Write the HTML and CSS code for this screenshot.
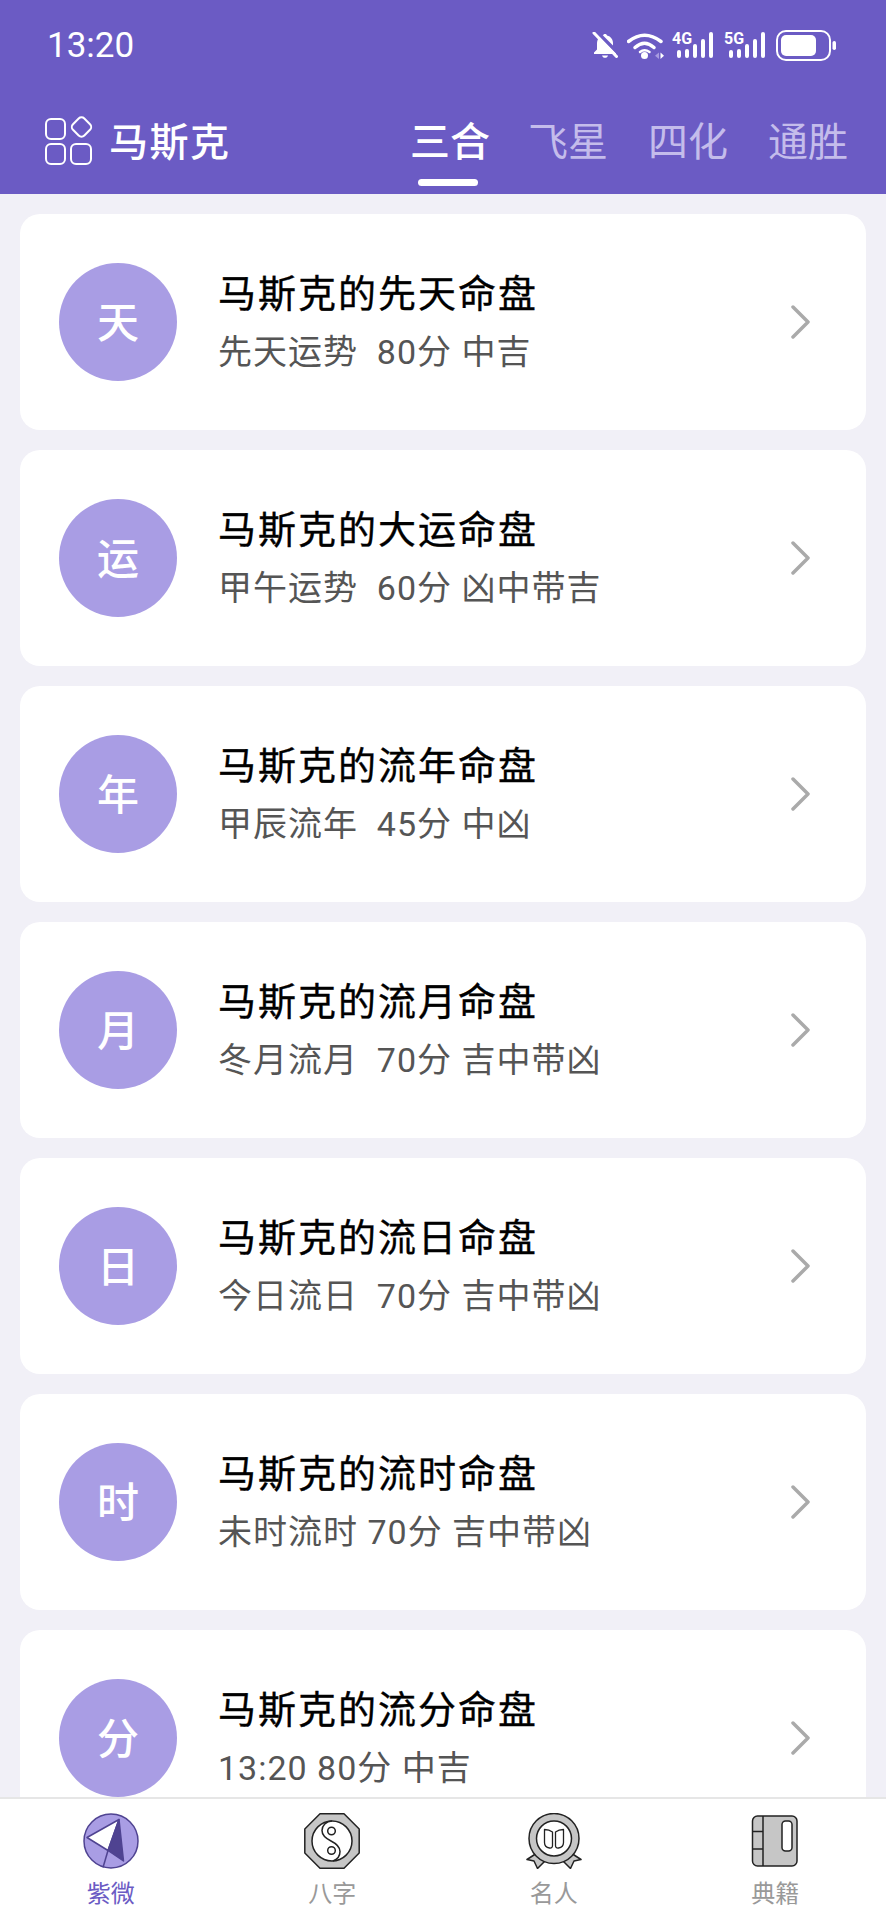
FILE: index.html
```html
<!DOCTYPE html>
<html lang="zh-CN">
<head>
<meta charset="utf-8">
<title>马斯克</title>
<link rel="stylesheet" href="styles.css">
</head>
<body>
<div class="app">
  <header class="top">
    <div class="status">
      <span class="time">13:20</span>
      <div class="status-icons">
        <svg class="ic-bell" viewBox="0 0 26 26"><path d="M13 2c1 0 2 .7 2 1.600 4 1 6 4 6 8v6l3 3v1.500H2v-1.500l3-3v-6c0-4 2-7 6-8C11 2.700 12 2 13 2z" fill="#fff"/><path d="M10 23.500h6c-.5 1.500-1.500 2.300-3 2.300s-2.500-.8-3-2.300z" fill="#fff"/><path d="M4 -1L27 22" stroke="#6b5bc4" stroke-width="3.500"/><path d="M2 1L24.500 24.500" stroke="#fff" stroke-width="3" stroke-linecap="round"/></svg>
        <svg class="ic-wifi" viewBox="0 0 37 29" fill="none" stroke="#fff" stroke-linecap="round"><path d="M1.500 10.500Q17.500-2 34 10.500" stroke-width="3.500"/><path d="M8 16.500Q17.500 8 27 16.500" stroke-width="3.500"/><path d="M13 21Q17.500 17.500 22.500 21" stroke-width="2.500"/><circle cx="17.500" cy="24.500" r="3.500" fill="#fff" stroke="none"/><path d="M32 21.500l-4 3.300 4 3.200z" fill="#a79ce0" stroke="none"/><path d="M33.500 21.500l3.500 3.300-3.500 3.200z" fill="#fff" stroke="none"/></svg>
        <div class="net"><span class="net-label">4G</span><svg class="bars" viewBox="0 0 42 27"><rect x="5" y="18" width="4" height="8" rx="2"/><rect x="13" y="17" width="4" height="9" rx="2"/><rect x="21" y="12" width="4" height="14" rx="2"/><rect x="29" y="7" width="4" height="19" rx="2"/><rect x="37" y="0" width="4" height="26" rx="2"/></svg></div>
        <div class="net"><span class="net-label">5G</span><svg class="bars" viewBox="0 0 42 27"><rect x="5" y="18" width="4" height="8" rx="2"/><rect x="13" y="17" width="4" height="9" rx="2"/><rect x="21" y="12" width="4" height="14" rx="2"/><rect x="29" y="7" width="4" height="19" rx="2"/><rect x="37" y="0" width="4" height="26" rx="2"/></svg></div>
        <svg class="ic-batt" viewBox="0 0 61 31"><rect x="1" y="1" width="53" height="29" rx="9" fill="none" stroke="#fff" stroke-width="2"/><rect x="5" y="5" width="35" height="21" rx="5" fill="#fff"/><rect x="56.500" y="11" width="3.500" height="9" rx="1.700" fill="#fff"/></svg>
      </div>
    </div>
    <div class="bar">
      <div class="brand">
        <svg class="ic-apps" viewBox="0 0 50 50" fill="none" stroke="#fff" stroke-width="2"><rect x="2" y="4" width="19" height="20" rx="5"/><rect x="29.500" y="4" width="16" height="16" rx="4" transform="rotate(45 37.500 12)"/><rect x="2" y="29" width="19" height="20" rx="5"/><rect x="27" y="29" width="20" height="20" rx="5"/></svg>
        <span class="brand-name">马斯克</span>
      </div>
      <nav class="tabs">
        <span class="tab tab-on">三合</span>
        <span class="tab">飞星</span>
        <span class="tab">四化</span>
        <span class="tab">通胜</span>
      </nav>
    </div>
  </header>

  <main class="list">
    <article class="card"><div class="dot">天</div><div class="info"><h2 class="name">马斯克的先天命盘</h2><p class="sub">先天运势&nbsp; 80分 中吉</p></div><svg class="chev" viewBox="0 0 20 34"><path d="M2 2l15 15L2 32"/></svg></article>
    <article class="card"><div class="dot">运</div><div class="info"><h2 class="name">马斯克的大运命盘</h2><p class="sub">甲午运势&nbsp; 60分 凶中带吉</p></div><svg class="chev" viewBox="0 0 20 34"><path d="M2 2l15 15L2 32"/></svg></article>
    <article class="card"><div class="dot">年</div><div class="info"><h2 class="name">马斯克的流年命盘</h2><p class="sub">甲辰流年&nbsp; 45分 中凶</p></div><svg class="chev" viewBox="0 0 20 34"><path d="M2 2l15 15L2 32"/></svg></article>
    <article class="card"><div class="dot">月</div><div class="info"><h2 class="name">马斯克的流月命盘</h2><p class="sub">冬月流月&nbsp; 70分 吉中带凶</p></div><svg class="chev" viewBox="0 0 20 34"><path d="M2 2l15 15L2 32"/></svg></article>
    <article class="card"><div class="dot">日</div><div class="info"><h2 class="name">马斯克的流日命盘</h2><p class="sub">今日流日&nbsp; 70分 吉中带凶</p></div><svg class="chev" viewBox="0 0 20 34"><path d="M2 2l15 15L2 32"/></svg></article>
    <article class="card"><div class="dot">时</div><div class="info"><h2 class="name">马斯克的流时命盘</h2><p class="sub">未时流时 70分 吉中带凶</p></div><svg class="chev" viewBox="0 0 20 34"><path d="M2 2l15 15L2 32"/></svg></article>
    <article class="card"><div class="dot">分</div><div class="info"><h2 class="name">马斯克的流分命盘</h2><p class="sub">13:20 80分 中吉</p></div><svg class="chev" viewBox="0 0 20 34"><path d="M2 2l15 15L2 32"/></svg></article>
  </main>

  <footer class="dock">
    <div class="dock-item dock-on">
      <svg class="dock-ic" viewBox="0 0 56 56"><circle cx="28" cy="28" r="27" fill="#a99de4" stroke="#4f4391" stroke-width="1.500"/><path d="M4 24.500L36 6.500 25 37.500z" fill="#fff" stroke="#4f4391" stroke-width="1.500" stroke-linejoin="round"/><path d="M36 6.500L40.500 48 25 37.500z" fill="#4f4391" stroke="#4f4391" stroke-width="1.500" stroke-linejoin="round"/><path d="M25 37.500L20 54.500" stroke="#4f4391" stroke-width="1.500"/></svg>
      <span class="dock-label">紫微</span>
    </div>
    <div class="dock-item">
      <svg class="dock-ic" viewBox="0 0 56 56"><path d="M16 .8h24L55.200 16v24L40 55.200H16L.8 40V16z" fill="#c6c6c6" stroke="#222" stroke-width="1.500" stroke-linejoin="round"/><circle cx="28" cy="28" r="20" fill="#fff" stroke="#222" stroke-width="1.500"/><path d="M28 8c-6 0-10 5-10 9.500C18 23 23 26 27 28c4 2 9 5 9 10.500 0 4.500-3 8-7 9.500" fill="none" stroke="#222" stroke-width="1.500"/><circle cx="27.500" cy="18" r="3.800" fill="#fff" stroke="#222" stroke-width="1.500"/><circle cx="27.500" cy="37.500" r="3.800" fill="#fff" stroke="#222" stroke-width="1.500"/></svg>
      <span class="dock-label">八字</span>
    </div>
    <div class="dock-item">
      <svg class="dock-ic" viewBox="0 0 56 56"><path d="M11 40L1 46.500l7 1.500 3.500 7.500 9-9zM45 40l10 6.500-7 1.500-3.500 7.500-9-9z" fill="#c6c6c6" stroke="#222" stroke-width="1.500" stroke-linejoin="round"/><circle cx="28" cy="25.500" r="25" fill="#c6c6c6" stroke="#222" stroke-width="1.500"/><circle cx="28" cy="25.500" r="17.500" fill="#fff" stroke="#222" stroke-width="1.500"/><path d="M26.500 19c-2-1.500-5-2.500-8-2.500v13c0 3 2 5 5 5.500 2 .3 3-.7 3-2.500zM29.500 19c2-1.500 5-2.500 8-2.500v13c0 3-2 5-5 5.500-2 .3-3-.7-3-2.500z" fill="#fff" stroke="#222" stroke-width="1.300" stroke-linejoin="round"/></svg>
      <span class="dock-label">名人</span>
    </div>
    <div class="dock-item">
      <svg class="dock-ic" viewBox="0 0 56 56"><rect x="5.500" y="3" width="44.500" height="50" rx="5" fill="#c6c6c6" stroke="#222" stroke-width="1.500"/><path d="M16 3v50M5.500 18.500H16M5.500 36H16" fill="none" stroke="#222" stroke-width="1.500"/><rect x="35" y="8" width="10" height="30" rx="3.500" fill="#fff" stroke="#222" stroke-width="1.500"/></svg>
      <span class="dock-label">典籍</span>
    </div>
  </footer>
</div>
</body>
</html>
```

FILE: styles.css
```css
* { box-sizing: border-box; }
html, body { margin: 0; padding: 0; }
body {
  background: #f1f0f7;
  font-family: "Roboto", "Noto Sans CJK SC", sans-serif;
}
.app {
  width: 886px;
  height: 1920px;
  display: flex;
  flex-direction: column;
  overflow: hidden;
}
.top {
  flex: none;
  height: 194px;
  background: #6b5bc4;
  color: #fff;
  padding: 0 38px 0 44px;
}
.status {
  height: 90px;
  display: flex;
  align-items: center;
  justify-content: space-between;
  padding-right: 11px;
}
.time {
  font-size: 35px;
  line-height: 40px;
  padding-left: 3px;
  margin-top: 2px;
}
.status-icons {
  display: flex;
  align-items: center;
}
.ic-bell { width: 26px; height: 26px; margin-right: 9px; }
.ic-wifi { width: 37px; height: 29px; margin-right: 8px; }
.net { position: relative; width: 42px; height: 27px; margin-right: 10px; }
.net-label {
  position: absolute;
  left: 0;
  top: -1px;
  font-size: 16px;
  line-height: 16px;
  font-weight: 700;
}
.bars { position: absolute; left: 0; top: 0; width: 42px; height: 27px; fill: #fff; }
.ic-batt { width: 61px; height: 31px; }
.bar {
  height: 104px;
  padding-top: 2px;
  display: flex;
  align-items: center;
  justify-content: space-between;
}
.brand { display: flex; align-items: center; gap: 15px; }
.ic-apps { width: 50px; height: 50px; margin-top: -6px; }
.brand-name {
  font-size: 39px;
  line-height: 48px;
  font-weight: 500;
  letter-spacing: 1.5px;
}
.tabs { display: flex; gap: 40px; }
.tab {
  position: relative;
  font-size: 40px;
  line-height: 48px;
  color: #c4bceb;
  width: 80px;
  text-align: center;
  white-space: nowrap;
}
.tab-on { color: #fff; font-weight: 500; margin-right: -2px; }
.tab-on::after {
  content: "";
  position: absolute;
  left: 8px;
  right: 12px;
  bottom: -19px;
  height: 7px;
  border-radius: 4px;
  background: #fff;
}
.list {
  flex: 1;
  min-height: 0;
  overflow: hidden;
  padding: 20px 20px 0;
  display: flex;
  flex-direction: column;
  gap: 20px;
}
.card {
  flex: none;
  height: 216px;
  background: #fff;
  border-radius: 20px;
  padding: 0 55px 0 39px;
  display: flex;
  align-items: center;
}
.dot {
  flex: none;
  width: 118px;
  height: 118px;
  border-radius: 50%;
  background: #a99de4;
  color: #fff;
  font-size: 42px;
  font-weight: 500;
  line-height: 1;
  padding-top: 3px;
  display: flex;
  align-items: center;
  justify-content: center;
}
.info { flex: 1; margin-left: 41px; }
.name {
  margin: 0;
  font-size: 38px;
  line-height: 50px;
  font-weight: 400;
  -webkit-text-stroke: .35px #000;
  color: #000;
  letter-spacing: 2px;
}
.sub {
  margin: 10px 0 0;
  font-size: 34px;
  line-height: 46px;
  color: #555;
  letter-spacing: 1px;
}
.chev {
  flex: none;
  width: 20px;
  height: 34px;
  fill: none;
  stroke: #aaa;
  stroke-width: 3.5px;
  stroke-linecap: round;
  stroke-linejoin: round;
}
.dock {
  flex: none;
  height: 123px;
  background: #fff;
  border-top: 2px solid #e6e6e6;
  display: grid;
  grid-template-columns: repeat(4, 1fr);
}
.dock-item {
  display: flex;
  flex-direction: column;
  align-items: center;
  padding-top: 14px;
}
.dock-ic { width: 56px; height: 56px; }
.dock-label {
  margin-top: 8px;
  font-size: 24px;
  line-height: 34px;
  color: #999;
}
.dock-on .dock-label { color: #6b5bc4; }
```
